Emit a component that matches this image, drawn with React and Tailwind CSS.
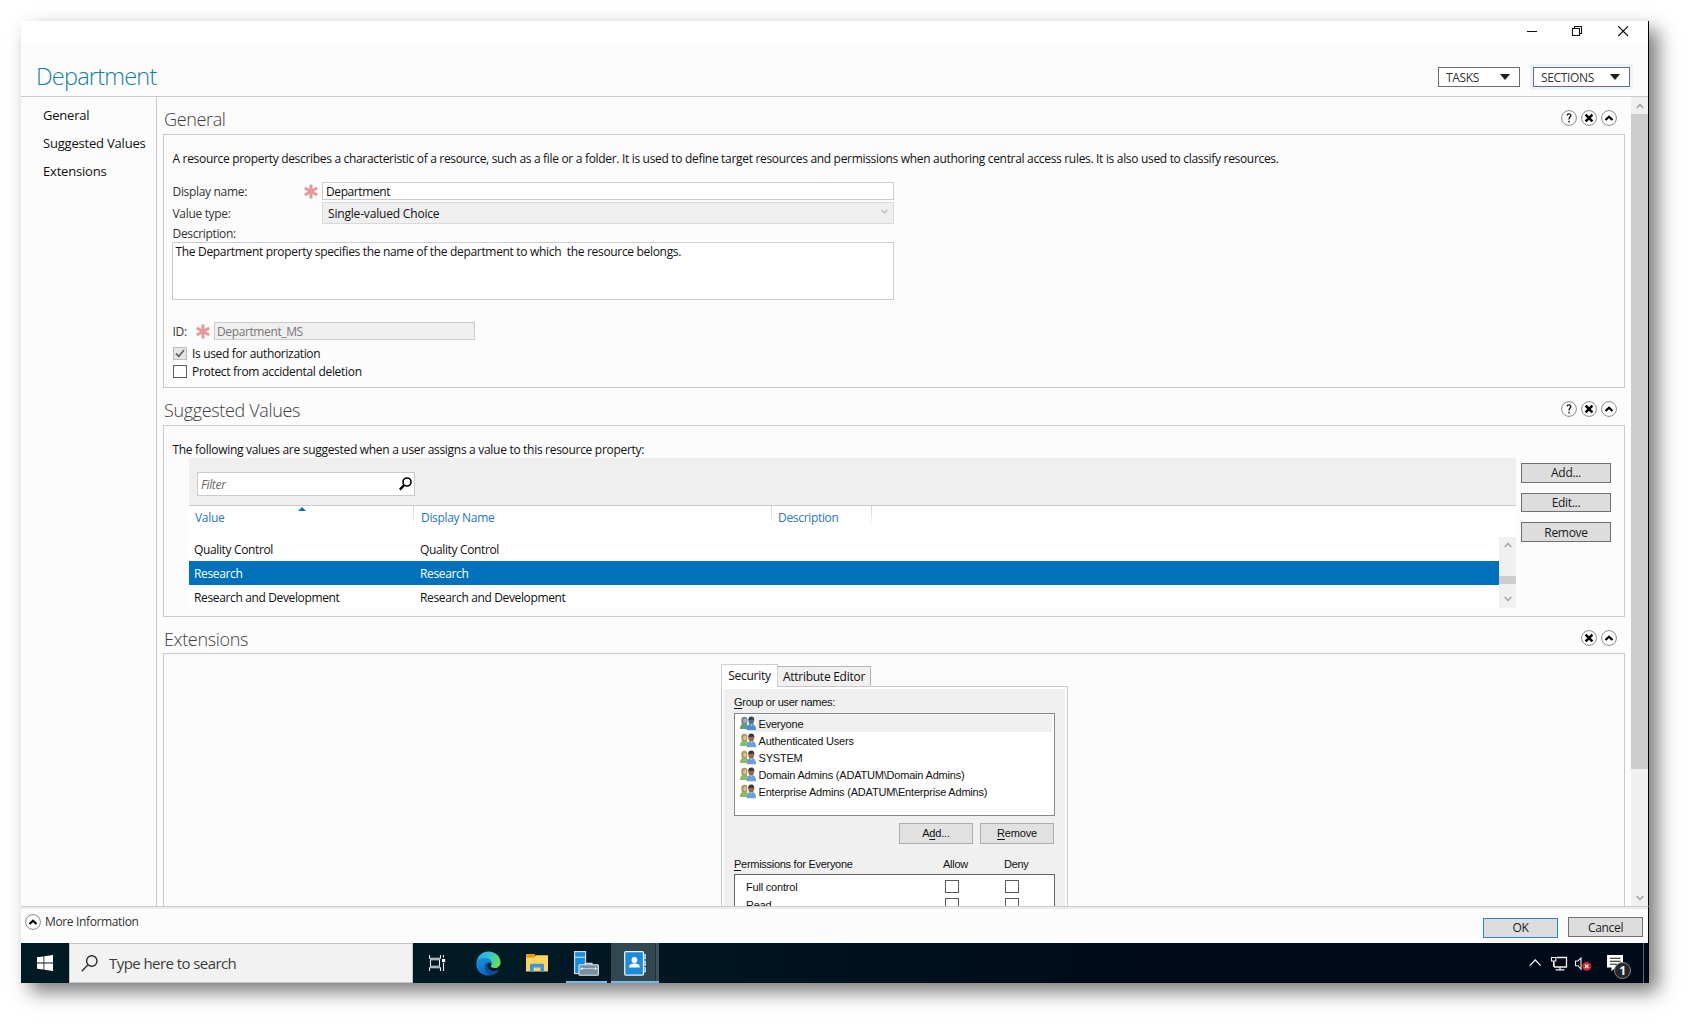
import { useState } from "react";

const NAV_ITEMS = ["General", "Suggested Values", "Extensions"];

const VALUES = [
  { value: "Quality Control", displayName: "Quality Control" },
  { value: "Research", displayName: "Research" },
  { value: "Research and Development", displayName: "Research and Development" },
];

const GROUPS = [
  "Everyone",
  "Authenticated Users",
  "SYSTEM",
  "Domain Admins (ADATUM\\Domain Admins)",
  "Enterprise Admins (ADATUM\\Enterprise Admins)",
];

const PERMISSIONS = ["Full control", "Read"];

function Chevron({ up = false, className = "", size = 8 }) {
  return (
    <svg width={size} height={size * 0.75} viewBox="0 0 8 6" className={className}>
      <path
        d={up ? "M0.7 5 L4 1.5 L7.3 5" : "M0.7 1 L4 4.5 L7.3 1"}
        fill="none"
        stroke="currentColor"
        strokeWidth="1.4"
      />
    </svg>
  );
}

function CircleIcon({ kind }) {
  return (
    <svg width="16" height="16" viewBox="0 0 16 16" className="shrink-0">
      <circle cx="8" cy="8" r="7.4" fill="#fff" stroke="#8a8a8a" strokeWidth="1" />
      {kind === "help" && (
        <>
          <path d="M6.1 5.4 C6.3 3.4 9.9 3.3 9.8 5.6 C9.7 7 8 7.3 8 9.4" fill="none" stroke="#1a1a1a" strokeWidth="1.4" />
          <rect x="7.3" y="10.8" width="1.5" height="1.6" fill="#1a1a1a" />
        </>
      )}
      {kind === "close" && (
        <path d="M4.6 4.6 L11.4 11.4 M11.4 4.6 L4.6 11.4" stroke="#000" strokeWidth="2.5" fill="none" />
      )}
      {kind === "up" && <path d="M4.5 10 L8 6.7 L11.5 10" stroke="#000" strokeWidth="2.2" fill="none" />}
    </svg>
  );
}

function Required() {
  return (
    <svg width="14" height="15" viewBox="0 0 14 15" className="shrink-0">
      <path d="M7 0.5 V14.5 M0.8 4 L13.2 11 M13.2 4 L0.8 11" stroke="#e59a97" strokeWidth="3" />
    </svg>
  );
}

function Check({ checked, disabled, className = "" }) {
  return (
    <span
      className={`flex h-[13px] w-[14px] shrink-0 items-center justify-center border ${
        disabled ? "border-[#bcbcbc] bg-[#e6e6e6]" : "border-[#5a5a5a] bg-white"
      } ${className}`}
    >
      {checked && (
        <svg width="10" height="9" viewBox="0 0 10 9">
          <path d="M1 4.5 L3.8 7.4 L9 1" fill="none" stroke="#666" strokeWidth="1.8" />
        </svg>
      )}
    </span>
  );
}

function Section({ title, icons, children, className = "" }) {
  return (
    <section>
      <div className="flex h-[37px] items-center justify-between pt-[5px] pr-[8px] pl-px">
        <h2 className="pt-px text-[18px] leading-[24px] font-light tracking-[-0.35px] text-[#404040]">{title}</h2>
        <div className="flex gap-1">
          {icons.map((k) => (
            <CircleIcon key={k} kind={k} />
          ))}
        </div>
      </div>
      <div className={`w-[1462px] border border-[#cbcbcb] ${className}`}>{children}</div>
    </section>
  );
}

function PushButton({ children, className = "" }) {
  return (
    <button className={`flex items-center justify-center border bg-[#ddd] text-[12px] text-[#1a1a1a] ${className}`}>
      {children}
    </button>
  );
}

function TitleBar() {
  return (
    <div className="flex h-[23px] justify-end bg-white pt-[5px] pr-[20px]">
      <svg width="102" height="11" viewBox="0 0 102 11" fill="none" stroke="#111" strokeWidth="1" className="mr-[-1px]">
        <path d="M0 5.5 H10" />
        <path d="M45.5 2.5 H52.5 V9.5 H45.5 Z M47.5 2.5 V0.5 H54.5 V7.5 H52.5" strokeWidth="1.1" />
        <path d="M91.3 0.3 L101 10 M101 0.3 L91.3 10" strokeWidth="1.1" />
      </svg>
    </div>
  );
}

function Header() {
  return (
    <div className="flex h-[53px] justify-between border-b border-[#cbcbcb] pr-[18px] pl-[15px]">
      <h1 className="pt-[18px] text-[23.5px] leading-[28px] font-light tracking-[-0.78px] text-[#127fa3]">Department</h1>
      <div className="flex gap-[13px] pt-[23px]">
        {[
          { label: "TASKS", width: "w-[82px]" },
          { label: "SECTIONS", width: "w-[97px] ring-3 ring-[#edf3fd]" },
        ].map((b) => (
          <button
            key={b.label}
            className={`flex h-[20px] items-center justify-between border border-[#6e6e6e] bg-white pr-[9px] pl-[7px] text-[12px] tracking-[-0.35px] text-[#333] ${b.width}`}
          >
            <span className="pt-[2px]">{b.label}</span>
            <svg width="10" height="6" viewBox="0 0 10 6">
              <path d="M0 0 H10 L5 6 Z" fill="#1e1e1e" />
            </svg>
          </button>
        ))}
      </div>
    </div>
  );
}

function GeneralSection() {
  return (
    <Section title="General" icons={["help", "close", "up"]} className="h-[254px] pl-[8px]">
      <p className="pl-[0.5px] text-[12px] leading-[47px] tracking-[-0.317px] whitespace-nowrap">
        A resource property describes a characteristic of a resource, such as a file or a folder. It is used to define
        target resources and permissions when authoring central access rules. It is also used to classify resources.
      </p>
      <div className="flex h-[18px] items-center">
        <span className="w-[132px] pt-px pl-[0.5px] text-[#333]">Display name:</span>
        <Required />
        <span className="ml-[4px] flex h-[18px] w-[572px] items-center border border-[#cbcbcb] bg-white pt-px pl-[3px] tracking-[-0.4px]">
          Department
        </span>
      </div>
      <div className="mt-[2px] flex h-[22px] items-center">
        <span className="w-[150px] pt-px pl-[0.5px] text-[#333]">Value type:</span>
        <span className="flex h-[22px] w-[572px] items-center justify-between border border-[#d9d9d9] bg-[#efefef] pt-px pr-[5px] pl-[5px] tracking-[-0.18px]">
          Single-valued Choice
          <Chevron size={7} className="mb-[4px] text-[#b5b5b5]" />
        </span>
      </div>
      <p className="pt-px pl-[0.5px] leading-[17px] text-[#333]">Description:</p>
      <div className="h-[58px] w-[722px] border border-[#cbcbcb] bg-white pl-[2.5px] leading-[17px] whitespace-pre">
        {"The Department property specifies the name of the department to which  the resource belongs."}
      </div>
      <div className="mt-[22px] flex h-[18px] items-center">
        <span className="w-[24px] pt-px pl-[0.5px] text-[#333]">ID:</span>
        <Required />
        <span className="ml-[4px] flex h-[18px] w-[261px] items-center border border-[#cbcbcb] bg-[#efefef] pt-px pl-[2px] tracking-[-0.38px] text-[#777]">
          Department_MS
        </span>
      </div>
      <label className="mt-[7px] flex h-[13px] items-center gap-[5px] pl-px tracking-[-0.34px]">
        <Check checked disabled />
        Is used for authorization
      </label>
      <label className="mt-[5px] flex h-[13px] items-center gap-[5px] pl-px tracking-[-0.3px]">
        <Check />
        Protect from accidental deletion
      </label>
    </Section>
  );
}

function ColumnHeader({ label, className }) {
  return (
    <div className={`flex ${className}`}>
      <span className="flex-1">{label}</span>
      <span className="h-[20px] w-px bg-linear-to-b from-[#cfcfcf] to-white" />
    </div>
  );
}

function ValuesTable() {
  const [selected, setSelected] = useState("Research");

  return (
    <div className="w-[1327px] bg-white">
      <div className="h-[48px] border-b border-[#cbcbcb] bg-[#efefef] pt-[14px] pl-[8px]">
        <div className="flex h-[24px] w-[218px] items-center justify-between border border-[#cbcbcb] bg-white pr-[2px] pl-[3px]">
          <span className="pt-[2px] text-[#666] italic">Filter</span>
          <svg width="13" height="14" viewBox="0 0 13 14" fill="none" stroke="#000">
            <circle cx="8" cy="5" r="4" strokeWidth="1.6" />
            <path d="M5.2 8 L0.9 12.6" strokeWidth="2.4" />
          </svg>
        </div>
      </div>
      <div className="flex h-[31px] leading-[23px] text-[#1e78c4]">
        <div className="relative">
          <ColumnHeader label="Value" className="w-[225px] pl-[6px]" />
          <svg width="8" height="4" viewBox="0 0 8 4" className="absolute top-px left-[109px]">
            <path d="M4 0 L8 4 H0 Z" fill="#0072bc" />
          </svg>
        </div>
        <ColumnHeader label="Display Name" className="w-[358px] pl-[7px]" />
        <ColumnHeader label="Description" className="w-[100px] pl-[6px]" />
      </div>
      <div className="flex h-[71px] overflow-hidden">
        <div className="flex-1">
          {VALUES.map((v) => (
            <div
              key={v.value}
              onClick={() => setSelected(v.value)}
              className={`flex h-[24px] items-center pt-px pl-[5px] tracking-[-0.36px] ${
                selected === v.value ? "bg-[#0072bc] text-white" : ""
              }`}
            >
              <span className="w-[226px]">{v.value}</span>
              <span>{v.displayName}</span>
            </div>
          ))}
        </div>
        <div className="flex w-[17px] flex-col items-center bg-[#f0f0f0] text-[#a0a0a0]">
          <Chevron up className="mt-[5px]" />
          <div className="mt-[28px] h-[8px] w-[17px] bg-[#cdcdcd]" />
          <Chevron className="mt-[12px]" />
        </div>
      </div>
    </div>
  );
}

function SuggestedValuesSection() {
  return (
    <Section title="Suggested Values" icons={["help", "close", "up"]} className="h-[192px]">
      <p className="h-[32px] pt-[15px] pl-[8.5px] leading-[17px] tracking-[-0.3px]">
        The following values are suggested when a user assigns a value to this resource property:
      </p>
      <div className="flex gap-[5px] pl-[25px]">
        <ValuesTable />
        <div className="flex w-[90px] flex-col gap-[10px] pt-[5px]">
          <PushButton className="h-[20px] border-[#707070]">Add...</PushButton>
          <PushButton className="h-[19px] border-[#707070]">Edit...</PushButton>
          <PushButton className="h-[20px] border-[#707070] pt-px">Remove</PushButton>
        </div>
      </div>
    </Section>
  );
}

function UsersIcon({ muted }) {
  return (
    <svg width="16" height="15" viewBox="0 0 16 15" className="shrink-0">
      <path d="M0 13 C0 9 2 7.5 4.5 7.5 C7 7.5 8.5 9 8.5 13 Z" fill={muted ? "#5f9a86" : "#8dba62"} />
      <path d="M1.3 5 C1 2 2.4 0.8 4.4 0.8 C6.6 0.8 7.6 2 7.4 5 L7 8 H1.8 Z" fill={muted ? "#73867f" : "#a89459"} />
      <ellipse cx="4.9" cy="4.9" rx="1.7" ry="2.3" fill={muted ? "#9fb0b4" : "#dfc094"} />
      <path d="M6.6 14.2 C6.6 9.8 8.4 8 11.2 8 C14.2 8 16 9.8 16 14.2 Z" fill={muted ? "#4f8fd0" : "#6aa1dc"} />
      <path d="M10.2 8 L11.4 10 L12.6 8 Z" fill="#cfe0f2" />
      <ellipse cx="11.2" cy="4.9" rx="2.8" ry="3.5" fill={muted ? "#56738f" : "#93694a"} />
      <path d="M8.2 4.4 C8.2 1.4 9.6 0.5 11.4 0.5 C13.6 0.5 14.6 2 14.3 5.2 L13.3 3.4 C11.5 3.8 9.6 3.4 8.2 4.4 Z" fill={muted ? "#2d4459" : "#40352c"} />
    </svg>
  );
}

function SecurityTabs() {
  const [tab, setTab] = useState("Security");

  return (
    <div className="ml-[557px] w-[347px] tracking-[-0.27px]">
      <div className="flex h-[22px] items-end">
        <button
          onClick={() => setTab("Security")}
          className="z-10 -mb-px h-[23px] w-[57px] border border-b-0 border-[#d0d0d0] bg-white text-center leading-[22px]"
        >
          Security
        </button>
        <button
          onClick={() => setTab("Attribute Editor")}
          className="-ml-px h-[20px] w-[94px] border border-b-0 border-[#b4b4b4] bg-[#f0f0f0] text-center leading-[20px]"
        >
          Attribute Editor
        </button>
      </div>
      <div className="border border-[#c8c8c8] bg-white p-[2px]">
        <div className="h-[240px] bg-[#f0f0f0] pt-[5px] pl-[10px] font-['Liberation_Sans',Arial,sans-serif] text-[11px] tracking-[-0.2px] text-[#111]">
          <p className="h-[19px] leading-[17px] tracking-[-0.3px]">
            <u className="underline-offset-2">G</u>roup or user names:
          </p>
          <div className="h-[103px] w-[321px] border border-[#828790] bg-white pt-[1px] pr-[2px]">
            {GROUPS.map((g, i) => (
              <div key={g} className="flex h-[17px] items-center pl-[5px]">
                <UsersIcon muted={i === 0} />
                <span className={`h-[17px] flex-1 pl-[2.5px] leading-[18px] ${i === 0 ? "bg-[#f0f0f0]" : ""}`}>{g}</span>
              </div>
            ))}
          </div>
          <div className="mt-[7px] flex gap-[7px] pl-[165px]">
            <button className="h-[21px] w-[74px] border border-[#adadad] bg-[#e1e1e1]">
              A<u className="underline-offset-2">d</u>d...
            </button>
            <button className="h-[21px] w-[74px] border border-[#adadad] bg-[#e1e1e1]">
              <u className="underline-offset-2">R</u>emove
            </button>
          </div>
          <div className="mt-[12px] flex h-[18px] leading-[17px] tracking-[-0.28px]">
            <span className="w-[209px]">
              <u className="underline-offset-2">P</u>ermissions for Everyone
            </span>
            <span className="w-[61px]">Allow</span>
            <span>Deny</span>
          </div>
          <div className="h-[80px] w-[321px] border border-[#646464] bg-white pt-[4px]">
            {PERMISSIONS.map((p) => (
              <div key={p} className="flex h-[18px] pl-[11px]">
                <span className="w-[199px] leading-[17px]">{p}</span>
                <Check className="mt-px mr-[46px]" />
                <Check className="mt-px" />
              </div>
            ))}
          </div>
        </div>
      </div>
    </div>
  );
}

function ScrollBar() {
  return (
    <div className="ml-auto flex w-[18px] shrink-0 flex-col border-r border-black">
      <div className="flex h-full flex-col items-center bg-[#f0f0f0] text-[#a0a0a0]">
        <div className="flex h-[17px] items-center">
          <Chevron up />
        </div>
        <div className="h-[655px] w-full bg-[#cdcdcd]" />
        <div className="mt-auto flex h-[17px] items-center">
          <Chevron />
        </div>
      </div>
    </div>
  );
}

function Footer() {
  return (
    <div className="flex h-[36px] shrink-0 justify-between border-t-2 border-[#ececec] pr-[5px] pl-[4px]">
      <div className="flex h-[16px] items-center gap-[4px] pt-[10px] tracking-[-0.36px] text-[#333]">
        <CircleIcon kind="up" />
        More Information
      </div>
      <div className="flex gap-[10px] pt-[8px]">
        <PushButton className="mt-px h-[20px] w-[75px] border-[#2b83d2]">OK</PushButton>
        <PushButton className="h-[20px] w-[75px] border-[#707070] pt-px">Cancel</PushButton>
      </div>
    </div>
  );
}

function EdgeIcon() {
  return (
    <svg width="25" height="25" viewBox="0 0 25 25">
      <defs>
        <linearGradient id="edgeTop" x1="0" y1="0.3" x2="1" y2="0.6">
          <stop offset="0" stopColor="#2aa9e8" />
          <stop offset="0.5" stopColor="#35c5cf" />
          <stop offset="1" stopColor="#6fe04c" />
        </linearGradient>
        <linearGradient id="edgeLeft" x1="0" y1="0" x2="0.4" y2="1">
          <stop offset="0" stopColor="#1597e0" />
          <stop offset="1" stopColor="#0a66c4" />
        </linearGradient>
      </defs>
      <path d="M0.6 12 C1 5 6 0.4 12.5 0.4 C19.5 0.4 24.6 5.5 24.6 11.5 C24.6 15 22 17 18.8 17 C16 17 14.6 16 14.8 15 C16 13.6 16 10 12.5 9.2 C7.5 8 2.5 9 0.6 12 Z" fill="url(#edgeTop)" />
      <path d="M0.4 12.8 C1 8.6 5 6.6 9 6.8 C13 7 16 9.4 15.8 12.6 C13 10.4 9 12.4 9 16 C9 20 12.5 24 15.5 24.2 C7.5 26.2 0 20.6 0.4 12.8 Z" fill="url(#edgeLeft)" />
      <path d="M9.2 13.8 C7.6 18.8 11.8 24.6 16.4 24 C19.4 23.2 22 21.4 23.4 18.8 C19 21 12.4 20 11.6 15.2 C11.4 13.8 12 12.4 13 11.8 C11.4 11.6 9.8 12.4 9.2 13.8 Z" fill="#0f4c99" />
    </svg>
  );
}

function TaskBar() {
  return (
    <div className="flex h-[40px] shrink-0 bg-linear-to-r from-[#001a24] from-30% to-[#000a18] to-70%">
      <div className="flex w-[48px] items-center justify-center">
        <svg width="16" height="16" viewBox="0 0 16 16" fill="#fff">
          <path d="M0 2.3 L6.5 1.4 V7.5 H0 Z M7.3 1.2 L16 0 V7.5 H7.3 Z M0 8.4 H6.5 V14.6 L0 13.7 Z M7.3 8.4 H16 V16 L7.3 14.8 Z" />
        </svg>
      </div>
      <div className="flex w-[344px] items-center border border-[#c4c4c4] bg-[#f2f2f2] pl-[11px] text-[15px] tracking-[-0.57px] text-[#3c3c3c]">
        <svg width="17" height="17" viewBox="0 0 17 17" fill="none" stroke="#2b2b2b" strokeWidth="1.4" className="mr-[11px]">
          <circle cx="10.8" cy="6" r="5.2" />
          <path d="M7 9.8 L0.8 16.2" />
        </svg>
        Type here to search
      </div>
      <div className="flex w-[153px] items-center pl-[16px]">
        <svg width="17" height="16" viewBox="0 0 17 16" fill="none" stroke="#e6ebec" strokeWidth="1.1">
          <path d="M0.5 0 V3.2 H11.5 V0 M0.5 16 V12.8 H11.5 V16 M1.5 4.8 H10.5 V11.2 H1.5 Z M14.5 0 V2.6 M14.5 8 V16" />
          <rect x="13" y="4" width="3.2" height="3.2" fill="#fff" stroke="none" />
        </svg>
        <div className="ml-[30px]">
          <EdgeIcon />
        </div>
        <svg width="22" height="18" viewBox="0 0 22 18" className="ml-[25px]">
          <path d="M0 0 H8.5 L10 2 V5 H0 Z" fill="#e39b12" />
          <path d="M0 3.4 H8.6 L10.2 1.2 H22 V17.5 H0 Z" fill="#fcd462" />
          <path d="M4 17.8 V11 Q4 9.7 5.3 9.7 H16.7 Q18 9.7 18 11 V17.8 H14.4 V13.6 H7.6 V17.8 Z" fill="#3f94dc" />
        </svg>
      </div>
      <div className="mr-[4px] flex w-[41px] flex-col items-center justify-between border-b-2 border-[#76b9ed] pt-[8px]">
        <svg width="25" height="25" viewBox="0 0 25 25">
          <rect x="0.6" y="0.6" width="11" height="22" fill="#1b8bdc" stroke="#cfe6f7" strokeWidth="1.1" />
          <path d="M1 6.2 H11" stroke="#cfe6f7" strokeWidth="1" />
          <path d="M11 14 V12.3 H18 V14" fill="none" stroke="#d8e0e6" strokeWidth="1.2" />
          <rect x="5" y="13.8" width="19.4" height="10.4" rx="1" fill="#7890a3" stroke="#e1e8ec" strokeWidth="1.1" />
          <path d="M6 17.6 H23.5" stroke="#c3d0d9" strokeWidth="1" />
          <path d="M8 16.6 V18.8 M21.4 16.6 V18.8" stroke="#fff" strokeWidth="1.2" />
        </svg>
      </div>
      <div className="flex border-b-2 border-[#76b9ed] bg-[#33474f]">
        <div className="flex w-[44px] justify-center pt-[8px]">
          <svg width="22" height="25" viewBox="0 0 22 25" className="ml-[3px]">
            <path d="M18 3.5 H21.6 V8 H18 M18 10 H21.6 V14.5 H18 M18 16.5 H21.6 V21 H18" fill="#6db8ee" stroke="#d5e9f7" strokeWidth="0.8" />
            <rect x="0.7" y="0.7" width="18.8" height="23.4" rx="1" fill="#1b8bdc" stroke="#e3f1fb" strokeWidth="1.3" />
            <circle cx="10.4" cy="9" r="2.9" fill="#fff" />
            <path d="M5 16.6 C5 13.4 7.2 12.6 10.4 12.6 C13.6 12.6 15.8 13.4 15.8 16.6 Z" fill="#fff" />
          </svg>
        </div>
        <div className="w-[4px] border-l border-[#1d2f37] bg-[#3d515a]" />
      </div>
      <div className="ml-auto flex items-center">
        <svg width="96" height="40" viewBox="0 0 96 40" fill="none" stroke="#f2f2f2" strokeWidth="1.3">
          <path d="M0.7 22.6 L6.2 17 L11.7 22.6" />
          <path d="M27.5 14.5 H37.5 V24 H25 M25 24 V19 M31 24 V26.6 M26.5 26.8 H35.5" />
          <path d="M22.5 14.5 H26.8 V18 H22.5 Z M24.6 18 V24" strokeWidth="1.1" />
          <path d="M46.5 18 H49 L52 15 V26 L49 22.7 H46.5 Z" strokeWidth="1.1" />
          <circle cx="57.7" cy="23.3" r="4.4" fill="#d9262c" stroke="none" />
          <path d="M56 21.6 L59.4 25 M59.4 21.6 L56 25" stroke="#fff" strokeWidth="1.2" />
          <path d="M78 12 H94 V24.6 H86.5 L82.5 28.2 V24.6 H78 Z" fill="#fff" stroke="none" />
          <path d="M81 15.3 H91.5 M81 18.3 H91.5 M81 21.3 H88" stroke="#101820" strokeWidth="1.1" />
        </svg>
        <span className="mt-[15px] -ml-[11px] flex size-[17px] items-center justify-center rounded-full border border-[#8c8c8c] bg-[#24282c] text-[12px] leading-none font-bold text-white">
          1
        </span>
        <span className="ml-[12px] h-[40px] w-[5px] border-l border-[#5d6671]" />
      </div>
      <div className="w-px bg-black" />
    </div>
  );
}

export default function App() {
  return (
    <div className="h-[1025px] w-[1691px] overflow-hidden bg-white pt-[21px] pl-[21px] font-['Open_Sans','Segoe_UI',sans-serif] text-[12px] tracking-[-0.32px] text-[#111]">
      <div className="flex h-[962px] w-[1628px] flex-col bg-[#fcfcfc] shadow-[9px_9px_18px_rgba(0,0,0,0.52)]">
        <div className="border-r border-black">
          <TitleBar />
          <Header />
        </div>
        <div className="flex h-[810px] overflow-hidden">
          <nav className="flex w-[136px] shrink-0 flex-col gap-[11px] border-r border-[#cbcbcb] pt-[10px] pl-[22px] text-[13px] leading-[17px] tracking-[-0.2px]">
            {NAV_ITEMS.map((item) => (
              <a key={item} className="whitespace-nowrap">
                {item}
              </a>
            ))}
          </nav>
          <main className="ml-[6px] w-[1462px] shrink-0">
            <GeneralSection />
            <SuggestedValuesSection />
            <Section title="Extensions" icons={["close", "up"]} className="-mt-px h-[400px] pt-[10px]">
              <SecurityTabs />
            </Section>
          </main>
          <ScrollBar />
        </div>
        <div className="border-t border-r border-t-[#cbcbcb] border-r-black">
          <Footer />
        </div>
        <TaskBar />
      </div>
    </div>
  );
}
